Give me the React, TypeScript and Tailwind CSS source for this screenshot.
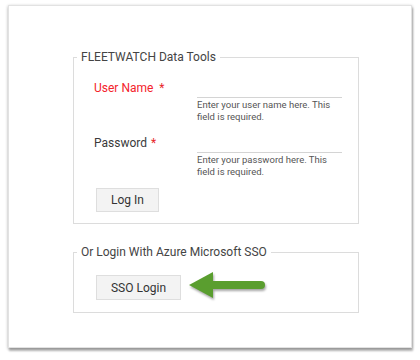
import React from 'react';

function GreenArrow() {
  return (
    <svg
      width="78"
      height="32"
      viewBox="0 0 78 32"
      className="-mt-[3px] drop-shadow-[1px_2px_1px_rgba(0,0,0,0.35)]"
    >
      <line x1="22" y1="15" x2="73" y2="15" stroke="#5a9e2f" strokeWidth="8" strokeLinecap="round" />
      <path d="M1 15 L25 2 L25 28 Z" fill="#5a9e2f" />
    </svg>
  );
}

interface FieldProps {
  label: string;
  hint: string;
  type?: string;
  highlight?: boolean;
}

function Field({ label, hint, type = 'text', highlight }: FieldProps) {
  return (
    <div className="flex items-start">
      <label
        className={`w-[103px] text-[12px] leading-[18px] ${highlight ? 'text-[#f4222a]' : 'text-[#3a3a3a]'}`}
      >
        {label} <span className={`text-[#e8262b] ${highlight ? 'ml-[3px]' : 'ml-[1px]'}`}>*</span>
      </label>
      <div className="w-[145px]">
        <input
          type={type}
          className="block w-full h-[19px] border-b border-[#d4d4d4] bg-transparent outline-none text-[12px]"
        />
        <p className="mt-[1px] text-[9.5px] leading-[12px] text-[#555]">{hint}</p>
      </div>
    </div>
  );
}

export default function App() {
  return (
    <div className="w-[420px] h-[360px] bg-white pt-[5px] pl-[8px] font-['Roboto',sans-serif]">
      <div className="w-[404px] h-[343px] bg-white border border-[#e2e2e2] shadow-[0_1px_3px_rgba(0,0,0,0.3),1px_3px_2px_rgba(0,0,0,0.25)] pt-[43px] pl-[64px]">
        <fieldset className="w-[286px] border border-[#dcdcdc]">
          <legend className="ml-[3px] px-[4px] text-[12px] leading-[16px] text-[#444]">
            FLEETWATCH Data Tools
          </legend>
          <div className="pl-[20px] pt-[14px] pb-[11px]">
            <div className="flex flex-col gap-[11px]">
              <Field label="User Name" hint="Enter your user name here. This field is required." highlight />
              <Field label="Password" type="password" hint="Enter your password here. This field is required." />
            </div>
            <button className="mt-[10px] ml-[2px] w-[63px] h-[24px] bg-[#f3f3f3] border border-[#dedede] text-[12px] text-[#333]">
              Log In
            </button>
          </div>
        </fieldset>

        <fieldset className="mt-[20px] w-[286px] border border-[#dcdcdc]">
          <legend className="ml-[3px] px-[4px] text-[12px] leading-[16px] text-[#444]">
            Or Login With Azure Microsoft SSO
          </legend>
          <div className="flex items-center gap-[7px] pl-[22px] pt-[13px] pb-[10px]">
            <button className="w-[85px] h-[25px] bg-[#f3f3f3] border border-[#dedede] text-[12px] text-[#333]">
              SSO Login
            </button>
            <GreenArrow />
          </div>
        </fieldset>
      </div>
    </div>
  );
}
